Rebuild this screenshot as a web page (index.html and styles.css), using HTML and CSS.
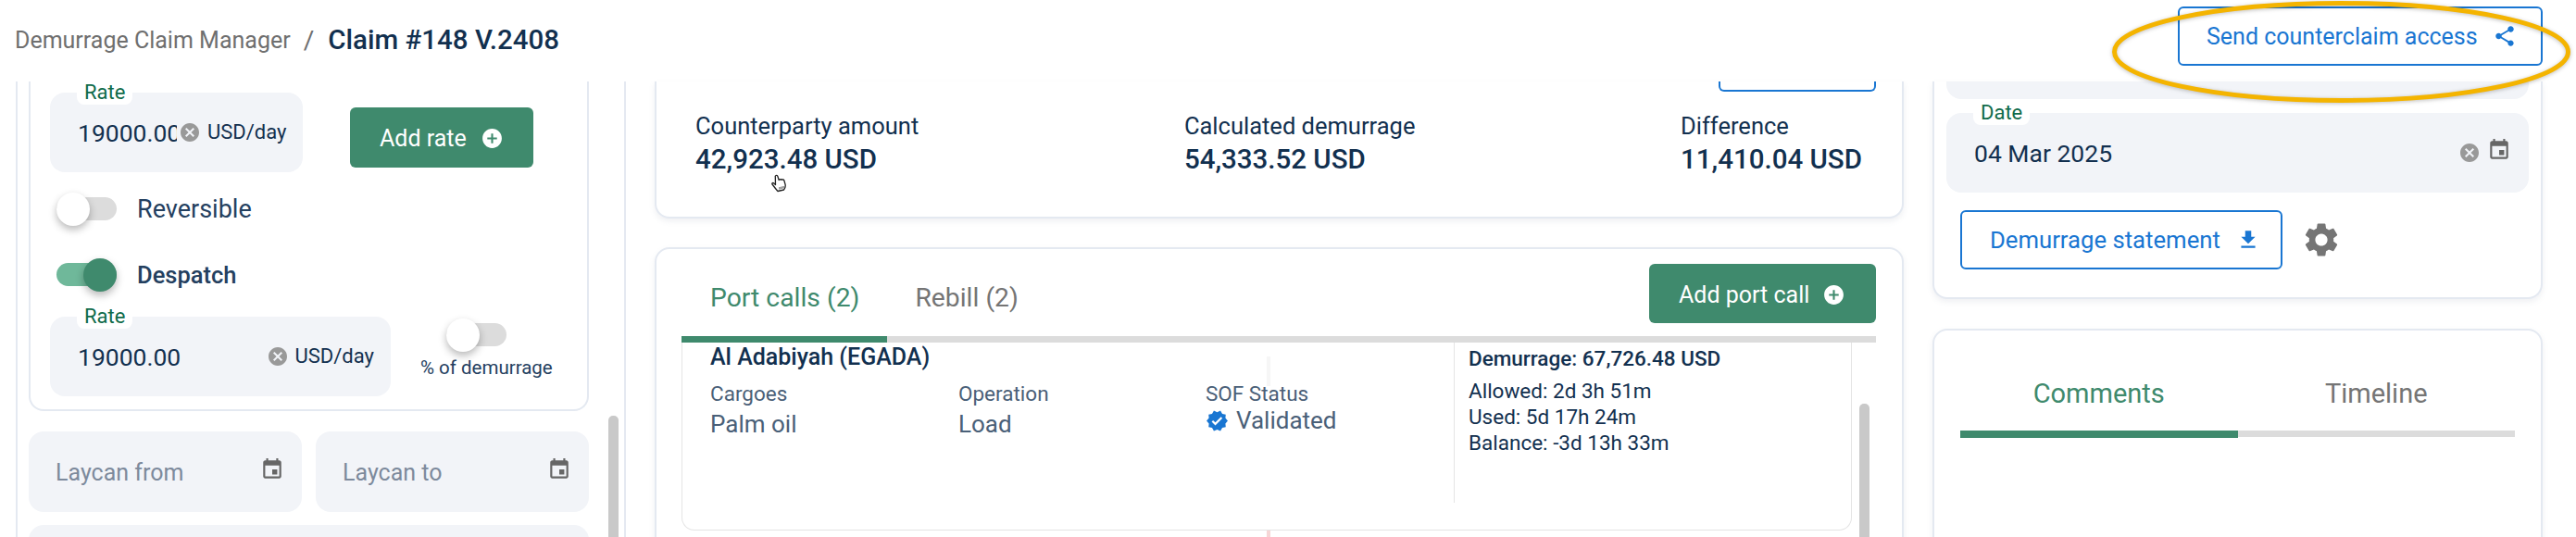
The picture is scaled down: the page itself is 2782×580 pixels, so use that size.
FILE: index.html
```html
<!DOCTYPE html>
<html lang="en">
<head>
<meta charset="utf-8">
<title>Claim #148 V.2408</title>
<link rel="stylesheet" href="styles.css">
</head>
<body>
<svg class="defs" width="0" height="0" aria-hidden="true">
  <defs>
    <symbol id="i-cancel" viewBox="0 0 24 24"><path d="M12 2C6.47 2 2 6.47 2 12s4.47 10 10 10 10-4.47 10-10S17.53 2 12 2zm5 13.59L15.59 17 12 13.41 8.41 17 7 15.59 10.59 12 7 8.41 8.41 7 12 10.59 15.59 7 17 8.41 13.41 12 17 15.59z"/></symbol>
    <symbol id="i-add" viewBox="0 0 24 24"><path d="M12 2C6.48 2 2 6.48 2 12s4.48 10 10 10 10-4.48 10-10S17.52 2 12 2zm5 11h-4v4h-2v-4H7v-2h4V7h2v4h4v2z"/></symbol>
    <symbol id="i-event" viewBox="0 0 24 24"><path d="M17 12h-5v5h5v-5zM16 1v2H8V1H6v2H5c-1.11 0-1.99.9-1.99 2L3 19c0 1.1.89 2 2 2h14c1.1 0 2-.9 2-2V5c0-1.1-.9-2-2-2h-1V1h-2zm3 18H5V8h14v11z"/></symbol>
    <symbol id="i-share" viewBox="0 0 24 24"><path d="M18 16.08c-.76 0-1.44.3-1.96.77L8.91 12.7c.05-.23.09-.46.09-.7s-.04-.47-.09-.7l7.05-4.11c.54.5 1.25.81 2.04.81 1.66 0 3-1.34 3-3s-1.34-3-3-3-3 1.34-3 3c0 .24.04.47.09.7L8.04 9.81C7.5 9.31 6.79 9 6 9c-1.66 0-3 1.34-3 3s1.34 3 3 3c.79 0 1.5-.31 2.04-.81l7.12 4.16c-.05.21-.08.43-.08.65 0 1.61 1.31 2.92 2.92 2.92 1.61 0 2.92-1.31 2.92-2.92s-1.31-2.92-2.92-2.92z"/></symbol>
    <symbol id="i-download" viewBox="0 0 24 24"><path d="M19 9h-4V3H9v6H5l7 7 7-7zM5 18v2h14v-2H5z"/></symbol>
    <symbol id="i-gear" viewBox="0 0 24 24"><path d="M19.14 12.94c.04-.3.06-.61.06-.94 0-.32-.02-.64-.07-.94l2.03-1.58c.18-.14.23-.41.12-.61l-1.92-3.32c-.12-.22-.37-.29-.59-.22l-2.39.96c-.5-.38-1.03-.7-1.62-.94l-.36-2.54c-.04-.24-.24-.41-.48-.41h-3.84c-.24 0-.43.17-.47.41l-.36 2.54c-.59.24-1.13.57-1.62.94l-2.39-.96c-.22-.08-.47 0-.59.22L2.74 8.87c-.12.21-.08.47.12.61l2.03 1.58c-.05.3-.09.63-.09.94s.02.64.07.94l-2.03 1.58c-.18.14-.23.41-.12.61l1.92 3.32c.12.22.37.29.59.22l2.39-.96c.5.38 1.03.7 1.62.94l.36 2.54c.05.24.24.41.48.41h3.84c.24 0 .44-.17.47-.41l.36-2.54c.59-.24 1.13-.56 1.62-.94l2.39.96c.22.08.47 0 .59-.22l1.92-3.32c.12-.22.07-.47-.12-.61l-2.01-1.58zM12 15.6c-1.98 0-3.6-1.62-3.6-3.6s1.62-3.6 3.6-3.6 3.6 1.62 3.6 3.6-1.62 3.6-3.6 3.6z"/></symbol>
    <symbol id="i-verified" viewBox="0 0 24 24"><path d="M23 12l-2.44-2.78.34-3.68-3.61-.82-1.89-3.18L12 3 8.6 1.54 6.71 4.72l-3.61.81.34 3.68L1 12l2.44 2.78-.34 3.69 3.61.82 1.89 3.18L12 21l3.4 1.46 1.89-3.18 3.61-.82-.34-3.68L23 12zm-12.91 4.72l-3.8-3.81 1.48-1.48 2.32 2.33 5.85-5.87 1.48 1.48-7.33 7.35z"/></symbol>
  </defs>
</svg>

<header class="topbar">
  <nav class="crumbs">
    <span class="crumb-root">Demurrage Claim Manager</span>
    <span class="crumb-sep">/</span>
    <span class="crumb-current">Claim #148 V.2408</span>
  </nav>
  <button class="btn btn-outline btn-send">Send counterclaim access<svg class="ic ic-share"><use href="#i-share"/></svg></button>
</header>

<main class="columns">
  <section class="card col-left">
    <div class="subcard">
      <div class="row-rate">
        <div class="field field-rate-a">
          <span class="float-label">Rate</span>
          <span class="value value-clip">19000.00</span>
          <svg class="ic ic-clear"><use href="#i-cancel"/></svg>
          <span class="unit">USD/day</span>
        </div>
        <button class="btn btn-green btn-add-rate">Add rate<svg class="ic ic-add"><use href="#i-add"/></svg></button>
      </div>
      <div class="row-toggle row-reversible">
        <span class="toggle"><span class="track"></span><span class="thumb"></span></span>
        <span class="toggle-label">Reversible</span>
      </div>
      <div class="row-toggle row-despatch">
        <span class="toggle toggle-on"><span class="track"></span><span class="thumb"></span></span>
        <span class="toggle-label toggle-label-strong">Despatch</span>
      </div>
      <div class="row-rate row-rate-b">
        <div class="field field-rate-b">
          <span class="float-label">Rate</span>
          <span class="value value-grow">19000.00</span>
          <svg class="ic ic-clear"><use href="#i-cancel"/></svg>
          <span class="unit">USD/day</span>
        </div>
        <div class="pct">
          <span class="toggle"><span class="track"></span><span class="thumb"></span></span>
          <span class="pct-label">% of demurrage</span>
        </div>
      </div>
    </div>
    <div class="row-laycan">
      <div class="field field-laycan"><span class="placeholder">Laycan from</span><svg class="ic ic-event"><use href="#i-event"/></svg></div>
      <div class="field field-laycan"><span class="placeholder">Laycan to</span><svg class="ic ic-event"><use href="#i-event"/></svg></div>
    </div>
    <div class="field field-next"></div>
    <span class="scrollbar scrollbar-left"></span>
  </section>

  <div class="col-mid">
    <section class="card card-summary">
      <div class="stub-button"></div>
      <div class="stats">
        <div class="stat"><div class="stat-label">Counterparty amount</div><div class="stat-value">42,923.48 USD</div></div>
        <div class="stat"><div class="stat-label">Calculated demurrage</div><div class="stat-value">54,333.52 USD</div></div>
        <div class="stat"><div class="stat-label">Difference</div><div class="stat-value">11,410.04 USD</div></div>
      </div>
      <svg class="hand" viewBox="0 0 18 20" width="18" height="20"><path d="M5 1.5c.9-.4 1.600.2 1.900 1l1.300 4c.1-1 1.500-1.200 1.900-.2.200-.9 1.500-1 1.900 0 .4-.6 1.500-.4 1.800.5l1.200 4.200c.6 2.500-.2 4.500-1.500 6l-6.500 1.500c-1.500-1.500-4.500-5.500-6-7.500-.6-1 .6-1.900 1.500-1.200l2 1.700L4.300 3c-.2-.6 0-1.200.7-1.500z" fill="#fff" stroke="#222" stroke-width="1.300" stroke-linejoin="round"/><path d="M9 14v2.500M11 13.500V16M13 13v2.500" stroke="#444" stroke-width="1"/></svg>
    </section>

    <section class="card card-ports">
      <div class="tab-head">
        <div class="tabs-left">
          <span class="tab tab-active">Port calls (2)</span>
          <span class="tab">Rebill (2)</span>
        </div>
        <button class="btn btn-green btn-add-port">Add port call<svg class="ic ic-add"><use href="#i-add"/></svg></button>
      </div>
      <div class="tab-line"><span class="tab-line-on tab-line-ports"></span></div>
      <article class="port">
        <div class="port-main">
          <h2 class="port-title">Al Adabiyah (EGADA)</h2>
          <div class="port-fields">
            <div class="pf"><div class="pf-label">Cargoes</div><div class="pf-value">Palm oil</div></div>
            <div class="pf"><div class="pf-label">Operation</div><div class="pf-value">Load</div></div>
            <div class="pf"><div class="pf-label">SOF Status</div><div class="pf-value pf-status"><svg class="ic ic-verified"><use href="#i-verified"/></svg>Validated</div></div>
          </div>
          <span class="faint-rule"></span>
        </div>
        <div class="port-side">
          <div class="side-title">Demurrage: 67,726.48 USD</div>
          <div class="side-lines">
            <div>Allowed: 2d 3h 51m</div>
            <div>Used: 5d 17h 24m</div>
            <div>Balance: -3d 13h 33m</div>
          </div>
        </div>
      </article>
      <div class="next-port-rule"></div>
      <span class="scrollbar scrollbar-mid"></span>
    </section>
  </div>

  <div class="col-right">
    <section class="card card-date">
      <div class="field stub-field"></div>
      <div class="field field-date">
        <span class="float-label">Date</span>
        <span class="value value-grow">04 Mar 2025</span>
        <svg class="ic ic-clear"><use href="#i-cancel"/></svg>
        <svg class="ic ic-event"><use href="#i-event"/></svg>
      </div>
      <div class="row-statement">
        <button class="btn btn-outline btn-statement">Demurrage statement<svg class="ic ic-download"><use href="#i-download"/></svg></button>
        <svg class="ic ic-gear"><use href="#i-gear"/></svg>
      </div>
    </section>
    <section class="card card-comments">
      <div class="tabs-even">
        <span class="tab tab-even tab-active">Comments</span>
        <span class="tab tab-even">Timeline</span>
      </div>
      <div class="tab-line tab-line-comments"><span class="tab-line-on tab-line-half"></span></div>
    </section>
  </div>
</main>

<svg class="annotation" viewBox="0 0 499 114" width="499" height="114" aria-hidden="true">
  <ellipse cx="249.500" cy="57" rx="245" ry="52.500" fill="none" stroke="#f4b400" stroke-width="5"/>
</svg>
</body>
</html>
```

FILE: styles.css
```css
* { box-sizing: border-box; }
html, body { margin: 0; padding: 0; }
body {
  position: relative;
  width: 2782px;
  height: 580px;
  overflow: hidden;
  background: #fff;
  color: #12304f;
  font-family: Roboto, "Liberation Sans", sans-serif;
  font-size: 25px;
}
.defs { position: absolute; }
.ic { display: block; flex: none; fill: currentColor; }

/* Header */
.topbar {
  height: 88px;
  padding: 7px 36px 0 16px;
  display: flex;
  justify-content: space-between;
  align-items: flex-start;
}
.crumbs {
  display: flex;
  align-items: center;
  height: 72px;
  font-size: 25px;
}
.crumb-root { color: #6f6f6f; }
.crumb-sep { color: #6f6f6f; font-size: 28px; margin: 0 15px 0 14px; }
.crumb-current { color: #12304f; font-weight: 500; font-size: 29.500px; }

/* Buttons */
.btn {
  display: flex;
  align-items: center;
  font-family: inherit;
  font-size: 25px;
  border-radius: 6px;
  padding: 0;
  background: none;
  border: 0;
  cursor: pointer;
}
.btn-outline { border: 2px solid #1976d2; color: #1976d2; background: #fff; }
.btn-green { background: #3f8a6d; color: #fff; }
.btn-send { width: 394px; height: 64px; padding-left: 29px; font-size: 25px; }
.ic-share { width: 26px; height: 26px; margin-left: 16px; }
.btn-add-rate { width: 198px; height: 65px; padding: 1px 0 0 32px; }
.ic-add { width: 25px; height: 25px; margin-left: 15px; }
.btn-add-port { width: 245px; height: 64px; padding: 2px 0 0 32px; }
.btn-add-port .ic-add { margin-left: 14px; }
.btn-statement { width: 348px; height: 64px; padding-left: 30px; font-size: 25.700px; }
.ic-download { width: 26px; height: 26px; margin-left: 17px; }

/* Columns */
.columns {
  height: 492px;
  padding: 0 36px 0 17px;
  display: grid;
  grid-template-columns: 659px 1349px 659px;
  column-gap: 31px;
  align-items: start;
}
.card {
  position: relative;
  background: #fff;
  border: 2px solid #e4e9f1;
  border-radius: 16px;
  box-shadow: 0 3px 6px rgba(120, 135, 160, .12);
}
.col-left {
  height: 492px;
  padding: 0 38px 0 12px;
  border-top: 0;
  border-bottom: 0;
  border-radius: 0;
  box-shadow: none;
  overflow: hidden;
}

/* Sub card */
.subcard {
  width: 605px;
  height: 356px;
  padding: 12px 21px 0;
  border: 2px solid #e4e9f1;
  border-top: 0;
  border-radius: 0 0 16px 16px;
}
.row-rate { display: flex; align-items: flex-start; }
.row-rate-b { margin-top: 27px; }

/* Fields */
.field {
  position: relative;
  display: flex;
  align-items: center;
  background: #f2f4f8;
  border-radius: 16px;
  height: 86px;
}
.float-label {
  position: absolute;
  left: 29px;
  top: -14px;
  height: 27px;
  padding: 0 8px;
  background: #fff;
  border-radius: 0 0 8px 8px;
  color: #0f6b4a;
  font-size: 22px;
  line-height: 28px;
}
.field-rate-a { width: 273px; padding-left: 30px; }
.field-rate-b { width: 368px; padding: 0 18px 0 30px; }
.value { font-size: 26.500px; color: #12304f; white-space: nowrap; }
.value-clip { width: 107px; overflow: hidden; }
.value-grow { flex: 1; }
.unit { font-size: 22px; color: #12304f; margin-top: -2px; }
.ic-clear { width: 24px; height: 24px; color: #999; margin: 0 7px 0 0; }
.btn-add-rate { margin: 16px 0 0 51px; }
.field-rate-a .ic-clear { margin-left: 2px; }

/* Toggles */
.toggle { position: relative; display: block; width: 65px; height: 36px; flex: none; }
.track {
  position: absolute;
  left: 0; right: 0; top: 5px;
  height: 25px;
  border-radius: 13px;
  background: #dcdcdc;
}
.thumb {
  position: absolute;
  left: 0; top: 0;
  width: 36px; height: 36px;
  border-radius: 50%;
  background: #fff;
  box-shadow: 0 4px 8px rgba(0, 0, 0, .28);
}
.toggle-on .track { background: #6fb89a; }
.toggle-on .thumb { left: 29px; background: #3f8a6d; }
.row-toggle { display: flex; align-items: center; gap: 22px; margin-left: 7px; height: 36px; }
.row-reversible { margin-top: 22px; }
.row-despatch { margin-top: 35px; }
.toggle-label { font-size: 27px; color: #24405f; }
.toggle-label-strong { font-size: 25.500px; font-weight: 500; }
.pct {
  margin-left: 32px;
  display: flex;
  flex-direction: column;
  align-items: flex-start;
}
.pct .toggle { margin: 2px 0 0 28px; }
.pct-label { font-size: 20.500px; line-height: 28px; margin-top: 3px; color: #24405f; white-space: nowrap; }

/* Laycan */
.row-laycan { display: flex; gap: 15px; margin-top: 22px; width: 605px; }
.field-laycan { width: 295px; height: 87px; justify-content: space-between; padding: 0 19px 0 29px; }
.placeholder { color: #7d8a9c; font-size: 25px; padding-top: 2px; }
.ic-event { width: 26px; height: 26px; color: #666; margin-top: -6px; }
.field-next { margin-top: 14px; width: 605px; height: 80px; }
.scrollbar {
  position: absolute;
  width: 11px;
  background: #c9c9c9;
  border-radius: 5px 5px 0 0;
}
.scrollbar-left { left: 638px; top: 361px; bottom: 0; }
.scrollbar-mid { left: 1299px; top: 167px; bottom: 0; }

/* Middle */
.col-mid { display: flex; flex-direction: column; gap: 31px; }
.card-summary {
  height: 148px;
  padding: 0 28px 0 27px;
  border-top: 0;
  border-radius: 0 0 16px 16px;
}
.stub-button {
  margin-left: auto;
  width: 170px;
  height: 11px;
  border: 2px solid #1976d2;
  border-top: 0;
  border-radius: 0 0 6px 6px;
}
.stats {
  display: flex;
  justify-content: space-between;
  margin-top: 22px;
  padding: 0 15px;
}
.stat-label { font-size: 25.500px; line-height: 30px; }
.stat-value { font-size: 29.500px; line-height: 36px; margin-top: 3px; font-weight: 500; }
.hand { position: absolute; left: 124px; top: 100px; }

.card-ports { height: 340px; padding: 16px 28px 0 27px; overflow: hidden; }
.tab-head { display: flex; justify-content: space-between; align-items: flex-start; }
.tabs-left { display: flex; gap: 60px; padding: 16px 0 0 31px; }
.tab { font-size: 28.300px; line-height: 42px; color: #757575; }
.tab-active { color: #3f8a6d; }
.tab-line { height: 7px; background: #dcdcdc; margin-top: 14px; position: relative; }
.tab-line-on { display: block; height: 7px; background: #3f8a6d; }
.tab-line-ports { width: 222px; }
.port {
  display: flex;
  width: 1264px;
  height: 203px;
  border: 1px solid #e4e4e4;
  border-top: 0;
  border-radius: 0 0 14px 14px;
}
.port-main { position: relative; flex: none; width: 833px; padding-left: 30px; }
.port-title { margin: 1px 0 0; font-size: 25px; line-height: 30px; font-weight: 500; }
.port-fields { display: grid; grid-template-columns: 268px 267px 1fr; margin-top: 10px; }
.pf-label { font-size: 22.500px; line-height: 28px; color: #4a6078; }
.pf-value { font-size: 26px; line-height: 32px; margin-top: 3px; color: #4a6078; }
.pf-status { display: flex; align-items: center; margin-top: -1px; }
.ic-verified { width: 25px; height: 25px; color: #1976d2; margin-right: 8px; }
.faint-rule { position: absolute; left: 631px; top: 15px; width: 4px; height: 32px; background: #f6f6f6; }
.port-side { flex: 1; height: 173px; border-left: 1px solid #e4e4e4; padding: 2px 0 0 15px; white-space: nowrap; }
.side-title { font-size: 22.500px; line-height: 30px; font-weight: 500; }
.side-lines { margin-top: 6px; font-size: 22.500px; line-height: 28px; }
.next-port-rule { width: 4px; height: 30px; margin-left: 632px; background: #f6d6d6; }

/* Right */
.col-right { display: flex; flex-direction: column; gap: 32px; }
.card-date { height: 235px; padding: 0 13px; border-top: 0; border-radius: 0 0 16px 16px; }
.stub-field { height: 19px; border-radius: 0 0 16px 16px; }
.field-date { margin-top: 15px; padding: 0 19px 0 30px; }
.field-date .ic-clear { margin-right: 0; }
.field-date .ic-event { margin-left: 7px; margin-right: 0; }
.row-statement { display: flex; align-items: center; margin: 19px 0 0 15px; gap: 20px; }
.ic-gear { width: 44px; height: 44px; color: #757575; }
.card-comments { height: 300px; padding: 50px 28px 0; }
.tabs-even { display: grid; grid-template-columns: 1fr 1fr; }
.tab-even { font-size: 29px; text-align: center; line-height: 36px; }
.tab-line-comments { margin-top: 22px; }
.tab-line-half { width: 50%; height: 8px; position: absolute; left: 0; top: 0; }

/* Hand-drawn highlight over the send button */
.annotation {
  position: absolute;
  left: 2279px;
  top: -1px;
  filter: drop-shadow(0 1px 2px rgba(0, 0, 0, .25));
}
```
